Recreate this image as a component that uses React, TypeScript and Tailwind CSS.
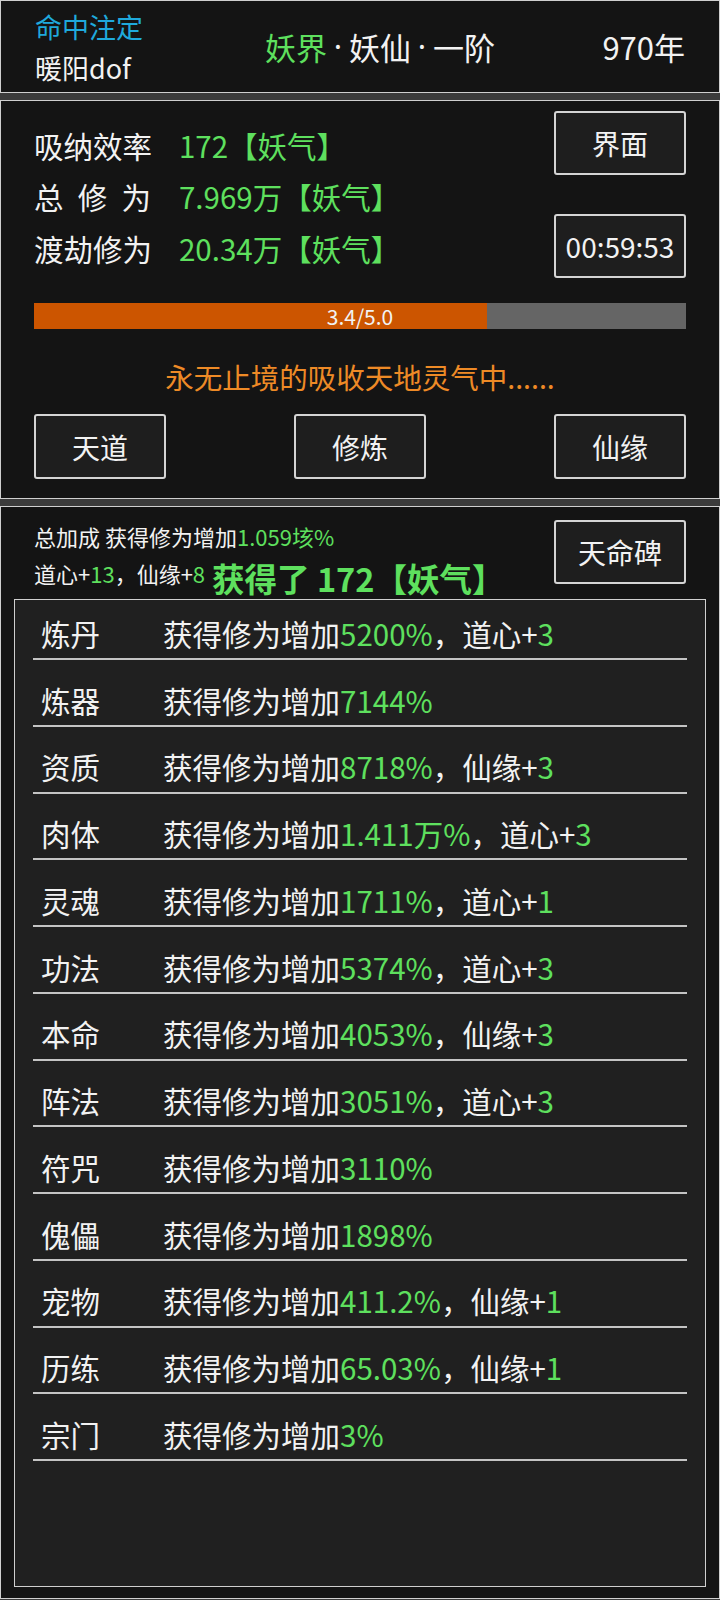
const bonusRows: { name: string; value: string; extra?: [string, string] }[] = [
  { name: "炼丹", value: "5200%", extra: ["道心+", "3"] },
  { name: "炼器", value: "7144%" },
  { name: "资质", value: "8718%", extra: ["仙缘+", "3"] },
  { name: "肉体", value: "1.411万%", extra: ["道心+", "3"] },
  { name: "灵魂", value: "1711%", extra: ["道心+", "1"] },
  { name: "功法", value: "5374%", extra: ["道心+", "3"] },
  { name: "本命", value: "4053%", extra: ["仙缘+", "3"] },
  { name: "阵法", value: "3051%", extra: ["道心+", "3"] },
  { name: "符咒", value: "3110%" },
  { name: "傀儡", value: "1898%" },
  { name: "宠物", value: "411.2%", extra: ["仙缘+", "1"] },
  { name: "历练", value: "65.03%", extra: ["仙缘+", "1"] },
  { name: "宗门", value: "3%" },
];

const stats = [
  { label: ["吸", "纳", "效", "率"], value: "172【妖气】" },
  { label: ["总", "修", "为"], value: "7.969万【妖气】" },
  { label: ["渡", "劫", "修", "为"], value: "20.34万【妖气】" },
];

const progress = { current: 3.4, max: 5.0 };

function GameButton({ children, className = "" }: { children: React.ReactNode; className?: string }) {
  return (
    <button
      type="button"
      className={`flex w-[132px] items-center justify-center rounded-[3px] border-2 border-[#d4d4d4] bg-[#1e1e1e] text-[28px] leading-none text-[#f2f2f2] ${className}`}
    >
      {children}
    </button>
  );
}

function Dot() {
  return <span className="inline-block w-[22px] text-center font-['Noto_Sans',sans-serif]">·</span>;
}

export default function App() {
  const pct = (progress.current / progress.max) * 100 + 1.5;

  return (
    <div
      className="flex h-[1600px] w-[720px] flex-col gap-[7px] bg-[#3b3b3b] pb-[1px] text-[#f2f2f2]"
      style={{ fontFamily: '"Noto Sans CJK SC", "Noto Sans", sans-serif' }}
    >
      {/* top status bar */}
      <div className="flex h-[93px] items-center border border-[#cfcfcf] bg-[#141414] pl-[34px] pr-[34px]">
        <div className="flex w-[130px] flex-col text-[27px] leading-[41px]">
          <span className="text-[#1fa9dc]">命中注定</span>
          <span>暖阳dof</span>
        </div>
        <div className="flex flex-1 items-center justify-center text-[31px] leading-none">
          <span className="text-[#5ee05e]">妖界</span>
          <Dot />
          <span>妖仙</span>
          <Dot />
          <span>一阶</span>
        </div>
        <div className="w-[90px] text-right text-[31px] leading-none">970年</div>
      </div>

      {/* cultivation panel */}
      <div className="flex h-[399px] flex-col border border-[#cfcfcf] bg-[#141414] px-[33px] pt-[10px]">
        <div className="flex h-[167px]">
          <div className="flex flex-1 flex-col pt-[8px]">
            {stats.map((s) => (
              <div key={s.value} className="flex h-[51.5px] items-center text-[29.5px]">
                <span className="flex w-[117px] justify-between">
                  {s.label.map((c, i) => (
                    <span key={i}>{c}</span>
                  ))}
                </span>
                <span className="ml-[28px] text-[#5ee05e]">{s.value}</span>
              </div>
            ))}
          </div>
          <div className="flex flex-col justify-between">
            <GameButton className="h-[64px]">界面</GameButton>
            <GameButton className="h-[64px]">00:59:53</GameButton>
          </div>
        </div>

        <div className="relative mt-[25px] h-[26px] bg-[#656565]">
          <div className="h-full bg-[#cc5500]" style={{ width: `${pct}%` }} />
          <div className="absolute inset-0 flex items-center justify-center text-[21px] leading-none text-[#f2f2f2]">
            3.4/5.0
          </div>
        </div>

        <div className="mt-[28px] text-center text-[28.5px] leading-[40px] text-[#ee8a26]">
          永无止境的吸收天地灵气中......
        </div>

        <div className="mt-[17px] flex justify-between">
          <GameButton className="h-[65px]">天道</GameButton>
          <GameButton className="h-[65px]">修炼</GameButton>
          <GameButton className="h-[65px]">仙缘</GameButton>
        </div>
      </div>

      {/* bonus panel */}
      <div className="relative flex flex-1 flex-col border border-[#cfcfcf] bg-[#141414] pb-[11px]">
        <div className="flex items-start px-[33px] pt-[11px]">
          <div className="flex-1 text-[22px] leading-[37px]">
            <div>
              总加成 获得修为增加<span className="text-[#5ee05e]">1.059垓%</span>
            </div>
            <div>
              道心+<span className="text-[#5ee05e]">13</span>，仙缘+<span className="text-[#5ee05e]">8</span>
            </div>
          </div>
          <GameButton className="mt-[2px] h-[64px]">天命碑</GameButton>
        </div>

        <div className="absolute left-[211px] top-[55px] text-[32.5px] font-bold leading-none text-[#5ee05e]">
          获得了 172【妖气】
        </div>

        <div className="mx-[13px] mt-[7px] flex-1 border border-[#cfcfcf] bg-[#202020] px-[18px]">
          {bonusRows.map((r, i) => (
            <div
              key={r.name}
              className={`flex items-center border-b-2 border-[#c4c4c4] pl-[8px] text-[29.5px] leading-none ${
                i === 0 ? "h-[60px] pt-[10px]" : "h-[66.75px] pt-[16px]"
              }`}
            >
              <span className="w-[122px]">{r.name}</span>
              <span>
                获得修为增加<span className="text-[#5ee05e]">{r.value}</span>
                {r.extra && (
                  <>
                    ，{r.extra[0]}
                    <span className="text-[#5ee05e]">{r.extra[1]}</span>
                  </>
                )}
              </span>
            </div>
          ))}
        </div>
      </div>
    </div>
  );
}
